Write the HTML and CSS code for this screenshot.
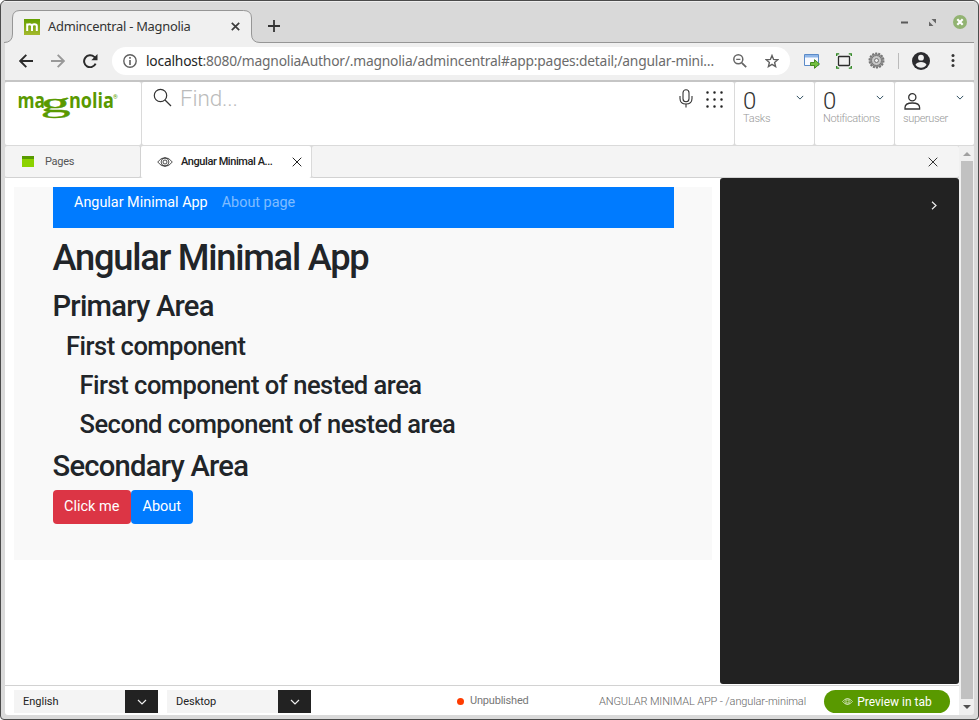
FILE: index.html
```html
<!DOCTYPE html>
<html lang="en">
<head>
<meta charset="utf-8">
<title>Admincentral - Magnolia</title>
<link rel="stylesheet" href="styles.css">
</head>
<body>
<svg class="defs" width="0" height="0">
  <symbol id="eye" viewBox="0 0 16 10"><g fill="none" stroke="currentColor" stroke-width=".8"><path d="M.7 5Q4 .6 8 .6T15.3 5Q12 9.4 8 9.4T.7 5Z"/><circle cx="8" cy="5" r="3.9"/><circle cx="8" cy="5" r="2"/></g></symbol>
  <symbol id="down" viewBox="0 0 10 6"><path d="M1 1l4 4 4-4" fill="none" stroke="currentColor" stroke-width="1.2"/></symbol>
  <symbol id="cross" viewBox="0 0 10 10"><path d="M.7.7l8.6 8.6M9.3.7L.7 9.3" fill="none" stroke="currentColor" stroke-width="1"/></symbol>
</svg>
<div class="window">
  <div class="titlebar">
    <div class="btab">
      <svg class="btab-shape" width="256" height="33" viewBox="0 0 256 33"><path d="M0 33V32.5Q8.500 32.500 8.500 24V8Q8.500.500 16 .500H239.500Q247.500.500 247.500 8V24Q247.500 32.500 256 32.500V33Z" fill="#f0f0f0"/><path d="M0 32.500Q8.500 32.500 8.500 24V8Q8.500.500 16 .500H239.500Q247.500.500 247.500 8V24Q247.500 32.500 256 32.500" fill="none" stroke="#969696"/></svg>
      <svg class="favicon" width="16" height="16" viewBox="0 0 16 16"><defs><linearGradient id="fav" x2="0" y2="1"><stop stop-color="#64a000"/><stop offset="1" stop-color="#a5b92d"/></linearGradient></defs><path fill="url(#fav)" d="M0 0h16v16H0z"/><path d="M3.200 12V4.500M3.200 7q0-1.700 2.300-1.700T8 7v5M8 7q0-1.700 2.400-1.700T12.800 7v5" fill="none" stroke="#fff" stroke-width="2"/></svg>
      <span class="btab-title">Admincentral - Magnolia</span>
      <svg class="btab-close" width="9" height="9" viewBox="0 0 9 9"><path d="M.8.8l7.400 7.400M8.200.8L.8 8.200" stroke="#3c3c3c" stroke-width="1.700"/></svg>
    </div>
    <svg class="newtab" width="12" height="12" viewBox="0 0 12 12"><path d="M6 0v12M0 6h12" stroke="#333" stroke-width="1.800"/></svg>
    <div class="controls">
      <svg width="7" height="3"><path d="M0 1.500h7" stroke="#5a5a5a" stroke-width="2"/></svg>
      <svg class="restore" width="7" height="7" viewBox="0 0 7 7" fill="#666"><path d="M2.500 0H7v4.500zM0 2.500V7h4.500z"/></svg>
      <svg width="14" height="14" viewBox="0 0 14 14"><circle cx="7" cy="7" r="7" fill="#92b372"/><path d="M4.300 4.300l5.400 5.400M9.700 4.300L4.300 9.700" stroke="#fff" stroke-width="2.200"/></svg>
    </div>
  </div>
  <div class="toolbar">
    <svg width="14" height="14" viewBox="0 0 14 14"><path d="M14 7H1.500M7.300.8L1.200 7l6.100 6.200" fill="none" stroke="#2b2b2b" stroke-width="1.900"/></svg>
    <svg width="14" height="14" viewBox="0 0 14 14"><path d="M0 7h12.500M6.700.8L12.800 7l-6.100 6.200" fill="none" stroke="#999" stroke-width="1.900"/></svg>
    <svg width="15" height="14" viewBox="0 0 15 14"><path d="M12.600 9.600A6 6 0 1 1 11.300 2.900L13 4.700" fill="none" stroke="#2b2b2b" stroke-width="2"/><path d="M14.500 0v6.200H8.300z" fill="#2b2b2b"/></svg>
    <div class="urlbar">
      <svg width="14" height="14" viewBox="0 0 14 14"><circle cx="7" cy="7" r="6.200" fill="none" stroke="#606060" stroke-width="1.400"/><path d="M7 3v1.700M7 6v5" stroke="#606060" stroke-width="1.600"/></svg>
      <span class="url"><b>localhost</b>:8080/magnoliaAuthor/.magnolia/admincentral#app:pages:detail;/angular-mini…</span>
      <svg width="14" height="14" viewBox="0 0 14 14" fill="none" stroke="#666"><circle cx="5.300" cy="5.300" r="4.500" stroke-width="1.500"/><path d="M8.800 8.800l4.400 4.400" stroke-width="1.800"/><path d="M3.200 5.300h4.200" stroke-width="1.300"/></svg>
      <svg class="star" width="14" height="14" viewBox="0 0 14 14"><path d="M7 1.500l1.600 3.900 4.200.3-3.200 2.700 1 4.200L7 10.400l-3.600 2.200 1-4.200L1.200 5.700l4.200-.3z" fill="none" stroke="#606060" stroke-width="1.400"/></svg>
    </div>
    <div class="exts">
      <svg width="16" height="16" viewBox="0 0 16 16"><path d="M.5 1.500h14v11H.5z" fill="#f8faff" stroke="#5a8ac8"/><path d="M1 2h13v2.500H1z" fill="#8fb6e8"/><path d="M6.500 9.500h4V6.700l5 4.300-5 4.300v-2.800h-4z" fill="#73c040" stroke="#458a20"/></svg>
      <svg width="16" height="16" viewBox="0 0 16 16" fill="none"><rect x="2.500" y="3.500" width="11" height="9" rx=".8" stroke="#2b2b2b" stroke-width="1.300"/><path d="M.7 3V.8h2.500M12.800.8h2.500V3M.7 13v2.200h2.500M12.800 15.200h2.500V13" stroke="#2d8520" stroke-width="1.300"/></svg>
      <svg width="17" height="17" viewBox="0 0 17 17"><circle cx="8.500" cy="8.500" r="7" fill="#999" stroke="#777" stroke-width="2" stroke-dasharray="2 1.140"/><circle cx="8.500" cy="8.500" r="5" fill="#c8c8c8" stroke="#777"/><circle cx="8.500" cy="8.500" r="2" fill="#eee" stroke="#777"/></svg>
      <i class="divider"></i>
      <svg width="18" height="18" viewBox="0 0 18 18"><circle cx="9" cy="9" r="9" fill="#2b2b2e"/><circle cx="9" cy="5.700" r="2.900" fill="#f0f0f0"/><path d="M3.500 12.700Q5 10 9 10t5.500 2.700Q12.500 15.700 9 15.700T3.500 12.700Z" fill="#f0f0f0"/></svg>
      <svg class="kebab" width="4" height="13" viewBox="0 0 4 13" fill="#333"><circle cx="2" cy="1.500" r="1.500"/><circle cx="2" cy="6.500" r="1.500"/><circle cx="2" cy="11.500" r="1.500"/></svg>
    </div>
  </div>
  <div class="page">
    <header class="shell">
      <div class="cell logo">
        <svg width="102" height="34" viewBox="0 0 102 34" fill="#599900"><g font-family="Open Sans, sans-serif" font-size="20.500" font-weight="700"><text x="-.5" y="20" textLength="27.500" lengthAdjust="spacingAndGlyphs">ma</text><text x="51" y="20" textLength="45" lengthAdjust="spacingAndGlyphs">nolia</text></g><text transform="translate(22.500 23.500) scale(2.150 1)" font-family="Liberation Serif, serif" font-weight="400" font-size="28" stroke="#599900" stroke-width=".4">g</text><text x="95" y="10.500" font-family="Roboto, sans-serif" font-size="6">®</text></svg>
      </div>
      <div class="cell search">
        <svg width="20" height="20" viewBox="0 0 20 20" fill="none" stroke="#333" stroke-width="1.200"><circle cx="7.500" cy="7.500" r="6.200"/><path d="M12 12l6 6"/></svg>
        <span class="find">Find...</span>
        <svg class="mic" width="14" height="19" viewBox="0 0 14 19" fill="none" stroke="#333" stroke-width="1.100"><rect x="4" y=".8" width="6" height="12" rx="3"/><path d="M1 7v2.500Q1 15 7 15t6-5.500V7M7 15v3.500"/></svg>
        <svg class="dots" width="17" height="17" viewBox="0 0 17 17"><path d="M1.500 1.500h14.100M1.500 8.500h14.100M1.500 15.500h14.100" stroke="#222" stroke-width="2.500" stroke-linecap="round" stroke-dasharray="0 7"/></svg>
      </div>
      <div class="cell stat"><span class="num">0</span><span class="label tasks">Tasks</span><svg class="caret" width="8" height="5"><use href="#down"/></svg></div>
      <div class="cell stat"><span class="num">0</span><span class="label">Notifications</span><svg class="caret" width="8" height="5"><use href="#down"/></svg></div>
      <div class="cell stat"><svg class="user" width="17" height="17" viewBox="0 0 17 17" fill="none" stroke="#333" stroke-width="1.300"><circle cx="8.300" cy="4.300" r="3.600"/><path d="M1 16v-1.500Q1 10 8.300 10t7.300 4.500V16z"/></svg><span class="label">superuser</span><svg class="caret" width="8" height="5"><use href="#down"/></svg></div>
    </header>
    <div class="body">
      <div class="main">
        <nav class="tabs">
          <div class="tab pages"><svg width="12" height="11"><path d="M0 1h12v10H0z" fill="#8cd200"/><path d="M0 0h12v3H0z" fill="#589a00"/></svg><span>Pages</span></div>
          <div class="tab active"><svg width="16" height="10"><use href="#eye"/></svg><span>Angular Minimal A...</span><svg class="x" width="10" height="10"><use href="#cross"/></svg></div>
          <div class="tab rest"><svg width="10" height="10"><use href="#cross"/></svg></div>
        </nav>
        <div class="work">
          <div class="canvas">
            <div class="app">
              <div class="navbar"><span>Angular Minimal App</span><span class="muted">About page</span></div>
              <h1>Angular Minimal App</h1>
              <h2>Primary Area</h2>
              <h3 class="in1">First component</h3>
              <h3 class="in2">First component of nested area</h3>
              <h3 class="in2 last">Second component of nested area</h3>
              <h2 class="second">Secondary Area</h2>
              <div class="buttons"><span class="btn red">Click me</span><span class="btn">About</span></div>
            </div>
          </div>
          <aside class="panel"><svg width="6" height="9" viewBox="0 0 6 9"><path d="M1 .8l4 3.700-4 3.700" fill="none" stroke="#eee" stroke-width="1.200"/></svg></aside>
        </div>
        <footer class="status">
          <div class="select"><span class="english">English</span><i><svg width="10" height="6"><use href="#down"/></svg></i></div>
          <div class="select"><span class="desktop">Desktop</span><i><svg width="10" height="6"><use href="#down"/></svg></i></div>
          <span class="bullet"></span><span class="unpub">Unpublished</span>
          <span class="path">ANGULAR MINIMAL APP - /angular-minimal</span>
          <span class="preview"><svg width="11" height="7" viewBox="0 0 16 10"><use href="#eye"/></svg><span>Preview in tab</span></span>
        </footer>
      </div>
      <div class="scrollbar"><i class="up"></i><i class="thumb"></i><i class="dn"></i></div>
    </div>
  </div>
</div>
</body>
</html>
```
FILE: styles.css
```css
* { box-sizing: border-box; }
html { background: #fff; }
body { margin: 0; font-family: Roboto, "Liberation Sans", sans-serif; color: #333; }
svg { display: block; flex: none; }
.defs { position: absolute; }
span { white-space: nowrap; }

.window { width: 979px; height: 720px; padding: 0 4px 4px 4px; background: #dadada; border: 1px solid #4b4b4b; border-radius: 6px 6px 4px 4px; overflow: hidden; display: flex; flex-direction: column; }
.titlebar { height: 42px; margin: 0 0 0 -1px; display: flex; flex: none; border-bottom: 1px solid #969696; border-top: 1px solid #eee; background: #d9d9d9; }
.btab { position: relative; width: 256px; height: 33px; margin-top: 8px; display: flex; align-items: center; padding: 0 16px 0 20px; }
.btab-shape { position: absolute; left: 0; top: 0; }
.favicon, .btab-title, .btab-close { position: relative; }
.btab-title { font: 12.900px "Noto Sans", sans-serif; margin: 0 0 2px 8px; width: 183px; letter-spacing: -.26px; }
.newtab { margin: 18px 0 0 8px; }
.controls { margin-left: auto; display: flex; align-items: center; gap: 17px; height: 40px; margin-right: 7px; }
.restore { margin-left: 4px; }
.toolbar { height: 37px; flex: none; display: flex; align-items: center; gap: 18px; padding: 0 16px 2px 14px; background: #f0f0f0; }
.urlbar { width: 678px; height: 28px; border-radius: 14px; background: #fff; display: flex; align-items: center; padding: 0 11px; margin-left: -4px; }
.url { width: 587px; margin: 0 6px 0 9px; font: 13.800px "Noto Sans", sans-serif; letter-spacing: -.195px; color: #6b6b6b; }
.url b { font-weight: 400; color: #252525; }
.star { margin-left: 18px; }
.exts { display: flex; align-items: center; gap: 16px; margin-left: -4px; }
.divider { width: 1px; height: 16px; background: #bbb; margin: 0 -3px 0 -3px; }
.kebab { margin-left: 5px; }

.page { flex: 1; min-height: 0; display: flex; flex-direction: column; background: #dadada; border-top: 2px solid #c5c5c5; border-radius: 0 0 3px 3px; overflow: hidden; }
.shell { height: 64px; display: grid; grid-template-columns: 136px 592px 79px 79px 79px; column-gap: 1px; flex: none; }
.cell { background: #fff; height: 63px; border-radius: 2px; position: relative; }
.logo { padding: 6px 0 0 13px; }
.logo svg { overflow: visible; }
.search { display: flex; padding: 6px 11px 0 11px; }
.find { font-size: 22.500px; line-height: 20px; font-weight: 300; color: #bbb; margin-left: 7px; letter-spacing: -.15px; }
.mic { margin: 1px 13px 0 auto; }
.dots { margin-top: 3px; }
.stat { display: flex; flex-direction: column; padding: 7px 8px 0; }
.num { font-size: 24px; font-weight: 300; line-height: 24px; margin-bottom: 1px; }
.label { font-size: 11px; line-height: 12px; font-weight: 300; color: #999; margin-top: -1px; letter-spacing: -.36px; }
.tasks { letter-spacing: -.2px; }
.user { margin: 4px 0 4px 1px; }
.caret { position: absolute; right: 10px; top: 13px; color: #2a4a5c; }

.body { flex: 1; min-height: 0; display: flex; }
.main { width: 954px; display: flex; flex-direction: column; }
.tabs { height: 32px; display: flex; flex: none; font-size: 11px; }
.tab { display: flex; align-items: center; background: #f4f4f4; border-bottom: 1px solid #d2d2d2; border-radius: 2px; }
.pages { width: 136px; padding-left: 17px; gap: 11px; border-right: 1px solid #d2d2d2; color: #555; letter-spacing: -.3px; }
.active { width: 170px; background: #fff; border-bottom: 0; padding: 0 9px 1px 16px; font-weight: 500; font-size: 11px; color: #222; letter-spacing: -.42px; }
.active span { margin-left: 8px; }
.active .x { margin-left: auto; }
.rest { flex: 1; justify-content: flex-end; padding-right: 21px; margin-left: 1px; }
.work { height: 507px; display: flex; background: #fff; flex: none; justify-content: space-between; }
.canvas { width: 698px; height: 373px; background: #f9f9f9; margin: 9px 0 0 9px; padding: 0 38px 0 39px; }
.app { color: #212529; }
.navbar { height: 41px; background: #007bff; color: #fff; display: flex; gap: 14px; padding: 7px 21px; font-size: 14.400px; line-height: 18px; }
.muted { color: rgba(255,255,255,.5); }
h1, h2, h3 { font-weight: 500; margin: 0 0 7.500px; white-space: nowrap; }
h1 { font-size: 36.300px; line-height: 45px; margin-top: 7px; margin-left: -.5px; letter-spacing: -1.260px; }
h2 { font-size: 29.200px; line-height: 36px; margin-left: -.5px; letter-spacing: -.770px; }
h3 { font-size: 25.500px; line-height: 31.500px; letter-spacing: -.490px; }
.in1 { padding-left: 13px; }
.in2 { padding-left: 26.500px; }
.second { margin-bottom: 6px; }
.buttons { display: flex; }
.btn { height: 34px; padding: 7px 12px 0 11px; border-radius: 4px; color: #fff; background: #007bff; font-size: 14.500px; line-height: 19px; }
.red { background: #dc3545; }
.panel { width: 239px; height: 506px; background: #222; border-radius: 3px; padding: 23px 0 0 211px; }
.status { flex: 1; border-top: 1px solid #d2d2d2; background: #fff; display: flex; align-items: center; padding: 2px 9px 0; font-size: 11px; }
.select { display: flex; align-items: center; width: 144px; height: 23px; margin-right: 9px; background: #f4f4f4; padding-left: 9px; color: #222; }
.select i { width: 33px; height: 23px; margin-left: auto; background: #222; color: #eee; display: flex; align-items: center; justify-content: center; }
.bullet { width: 7px; height: 7px; border-radius: 50%; background: #ff3c00; margin-left: 137px; margin-bottom: 1px; }
.unpub { margin-left: 6px; color: #777; margin-bottom: 2px; letter-spacing: -.2px; }
.path { margin-left: auto; margin-right: 18px; color: #666; font-size: 11px; font-weight: 300; letter-spacing: -.12px; }
.preview { width: 126px; height: 23px; border-radius: 12px; background: #599900; color: #fff; font-size: 12px; display: flex; align-items: center; justify-content: center; gap: 4px; }
.scrollbar { width: 15px; background: #f0f0f0; display: flex; flex-direction: column; align-items: center; }
.up { border: 4px solid transparent; border-top: 0; border-bottom: 4px solid #a0a0a0; margin-top: 6px; }
.thumb { width: 12px; height: 538px; margin-top: 5px; background: #c1c1c1; }
.dn { border: 4px solid transparent; border-bottom: 0; border-top: 4px solid #505050; margin-top: 6px; }
```
